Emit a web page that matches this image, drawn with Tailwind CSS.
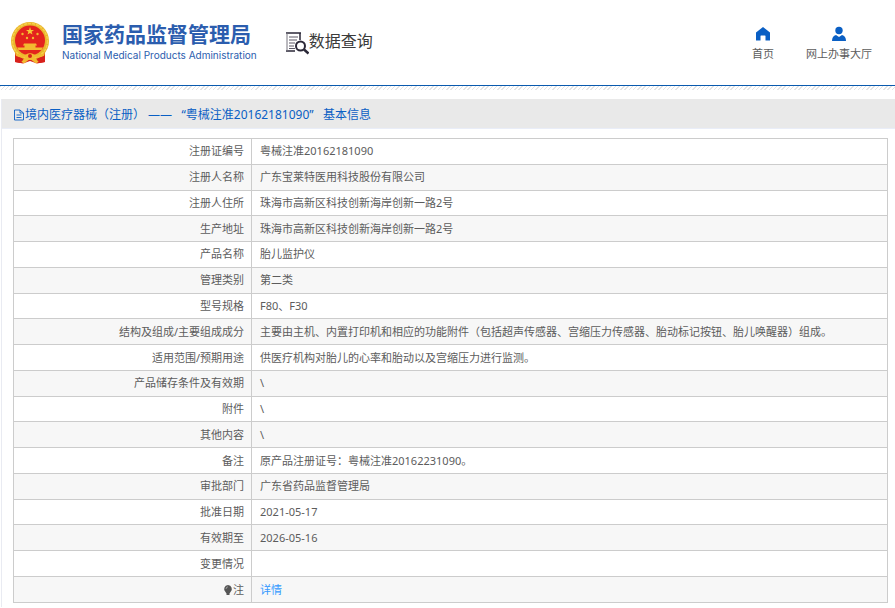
<!DOCTYPE html>
<html lang="zh-CN">

<head>
    <meta charset="UTF-8">
    <meta name="viewport" content="width=device-width, initial-scale=1.0">
    <title>国家药品监督管理局 - 数据查询</title>
    <script src="https://cdn.jsdelivr.net/npm/@tailwindcss/browser@4"></script>
</head>

<body class="bg-white font-['Noto_Sans','Noto_Sans_CJK_SC',sans-serif] text-[11px] text-[#5c5c5c]">
    <header class="flex h-[85px] items-center justify-between pr-[23px] pl-[10px]">
        <div class="flex items-center">
            <a href="#" class="flex items-center gap-3 text-[#2b5dae]">
                <!-- National emblem -->
                <svg class="h-[42px] w-10" viewBox="0 0 40 42">
                    <path d="M5 29 L5 40 L13 41.500 L20 39 L27 41.500 L35 40 L35 29 Z" fill="#d8211c" />
                    <circle cx="20" cy="19" r="19" fill="#e9b52c" />
                    <circle cx="20" cy="19" r="17.500" fill="none" stroke="#f6cf4a" stroke-width="1.500" stroke-dasharray="3 1" />
                    <circle cx="20" cy="18.500" r="15" fill="#e4231d" />
                    <path d="M20 5 L21 8 L24 8 L21.600 9.800 L22.500 12.600 L20 10.900 L17.500 12.600 L18.400 9.800 L16 8 L19 8 Z" fill="#f7c934" />
                    <g fill="#f3b930">
                        <circle cx="12.500" cy="12" r="1.200" />
                        <circle cx="27.500" cy="12" r="1.200" />
                        <circle cx="17" cy="16" r="1.200" />
                        <circle cx="23" cy="16" r="1.200" />
                        <path d="M14 21.500 H26 L27 23.500 H25.500 V25.500 H33 L31.500 28 H8.500 L7 25.500 H14.500 V23.500 H13 Z" />
                        <path d="M5 31 Q12 35 16 32.500 Q20 30 24 32.500 Q28 35 35 31 L34 34 Q28 37 24 35 L29 39.500 L26 41.500 L20 37 L14 41.500 L11 39.500 L16 35 Q12 37 6 34 Z" />
                    </g>
                    <path d="M5 34 L11 36 L13 38 L10 41 L5 40 Z M35 34 L29 36 L27 38 L30 41 L35 40 Z" fill="#d8211c" />
                    <circle cx="20" cy="34" r="2" fill="#d8211c" />
                </svg>
                <span class="flex flex-col">
                    <span class="text-[21px] leading-6 font-bold">国家药品监督管理局</span>
                    <span class="font-['Inter',sans-serif] text-[10px] leading-[18px]">National Medical Products Administration</span>
                </span>
            </a>
            <h1 class="ml-7 flex items-center pb-[3px] text-base leading-5 text-[#3b3b3b]">
                <svg class="mt-1 h-6 w-6" viewBox="0 0 24 24" fill="none" stroke="#2b2838">
                    <path d="M1 2 H16 M15 2 V9 M1 20 H10" stroke-width="1.500" />
                    <path d="M2 2 V20" stroke="#77747f" />
                    <path d="M4 6 H13 M4 9 H12 M4 12 H10 M4 15 H9 M4 17.500 H10" stroke="#5a5765" />
                    <circle cx="15.500" cy="15" r="4.500" stroke-width="2" />
                    <path d="M19 18.500 L23.500 22.500" stroke-width="2.500" />
                </svg>
                数据查询
            </h1>
        </div>
        <nav class="flex gap-8 pt-[2px] text-center leading-4">
            <a href="#" class="flex flex-col items-center gap-1">
                <svg class="h-4 w-4" viewBox="0 0 16 16" fill="#0a5fc4">
                    <path d="M8 1 L15 6.500 V14.500 H10.500 V10 Q10.500 9.500 10 9.500 H6 Q5.500 9.500 5.500 10 V14.500 H1 V6.500 Z" />
                </svg>
                首页
            </a>
            <a href="#" class="flex flex-col items-center gap-1">
                <svg class="h-4 w-4" viewBox="0 0 16 16" fill="#0a5fc4">
                    <circle cx="8" cy="4.500" r="3.700" />
                    <path d="M1 15 Q1 10 5 9 L8 11 L11 9 Q15 10 15 15 Z" />
                </svg>
                网上办事大厅
            </a>
        </nav>
    </header>
    <div class="h-[5px] border-t border-[#0a5aae] bg-[repeating-linear-gradient(135deg,#e4e4e4_0_1px,#ffffff_1px_3px)]"></div>

    <main class="mt-[9px] ml-px border-l border-[#e9ebf2]">
        <h2 class="flex h-[30px] items-center border-b border-[#e9edf8] bg-[#e9e9e9] pt-[2px] pl-[11px] text-xs text-[#0a5fc4]">
            <svg class="h-3 w-3" viewBox="0 0 12 12" fill="none" stroke="#0a5fc4">
                <path d="M1.500 1 H7 L10.500 4 V11 H1.500 Z M7 1 V4 H10.500 M3.500 6 H8.500 M3.500 8.500 H8.500" stroke-width="0.900" />
            </svg>
            <span>境内医疗器械（注册） —— &nbsp;&nbsp;“粤械注准20162181090” &nbsp;&nbsp;基本信息</span>
        </h2>
        <div class="pt-[9px] pr-[7px] pb-1 pl-[11px]">
            <table class="h-[465px] w-full table-fixed border-collapse leading-4 [&_td]:border [&_td]:border-[#cccccc] [&_td]:px-2 [&_th]:border [&_th]:border-[#cccccc] [&_th]:px-[7px] [&_th]:text-right [&_th]:font-normal [&_tr:nth-child(even)]:bg-[#f7f7f7]">
                <colgroup>
                    <col class="w-[238px]">
                    <col>
                </colgroup>
                <tbody>
                    <tr><th scope="row">注册证编号</th><td>粤械注准20162181090</td></tr>
                    <tr><th scope="row">注册人名称</th><td>广东宝莱特医用科技股份有限公司</td></tr>
                    <tr><th scope="row">注册人住所</th><td>珠海市高新区科技创新海岸创新一路2号</td></tr>
                    <tr><th scope="row">生产地址</th><td>珠海市高新区科技创新海岸创新一路2号</td></tr>
                    <tr><th scope="row">产品名称</th><td>胎儿监护仪</td></tr>
                    <tr><th scope="row">管理类别</th><td>第二类</td></tr>
                    <tr><th scope="row">型号规格</th><td>F80、F30</td></tr>
                    <tr><th scope="row">结构及组成/主要组成成分</th><td>主要由主机、内置打印机和相应的功能附件（包括超声传感器、宫缩压力传感器、胎动标记按钮、胎儿唤醒器）组成。</td></tr>
                    <tr><th scope="row">适用范围/预期用途</th><td>供医疗机构对胎儿的心率和胎动以及宫缩压力进行监测。</td></tr>
                    <tr><th scope="row">产品储存条件及有效期</th><td>\</td></tr>
                    <tr><th scope="row">附件</th><td>\</td></tr>
                    <tr><th scope="row">其他内容</th><td>\</td></tr>
                    <tr><th scope="row">备注</th><td>原产品注册证号：粤械注准20162231090。</td></tr>
                    <tr><th scope="row">审批部门</th><td>广东省药品监督管理局</td></tr>
                    <tr><th scope="row">批准日期</th><td>2021-05-17</td></tr>
                    <tr><th scope="row">有效期至</th><td>2026-05-16</td></tr>
                    <tr><th scope="row">变更情况</th><td></td></tr>
                    <tr>
                        <th scope="row">
                            <span class="flex items-center justify-end">
                                <svg class="h-[10px] w-[10px]" viewBox="0 0 10 10" fill="#555555">
                                    <path d="M5 0 A4 4 0 0 1 7.500 7 L6.500 8.500 V10 H3.500 V8.500 L2.500 7 A4 4 0 0 1 5 0 Z" />
                                    <path d="M3 4 Q3 2 5 1.800" fill="none" stroke="#bbbbbb" stroke-width="0.700" />
                                </svg>注
                            </span>
                        </th>
                        <td><a href="#" class="text-[#3399ff]">详情</a></td>
                    </tr>
                </tbody>
            </table>
        </div>
    </main>
</body>

</html>
